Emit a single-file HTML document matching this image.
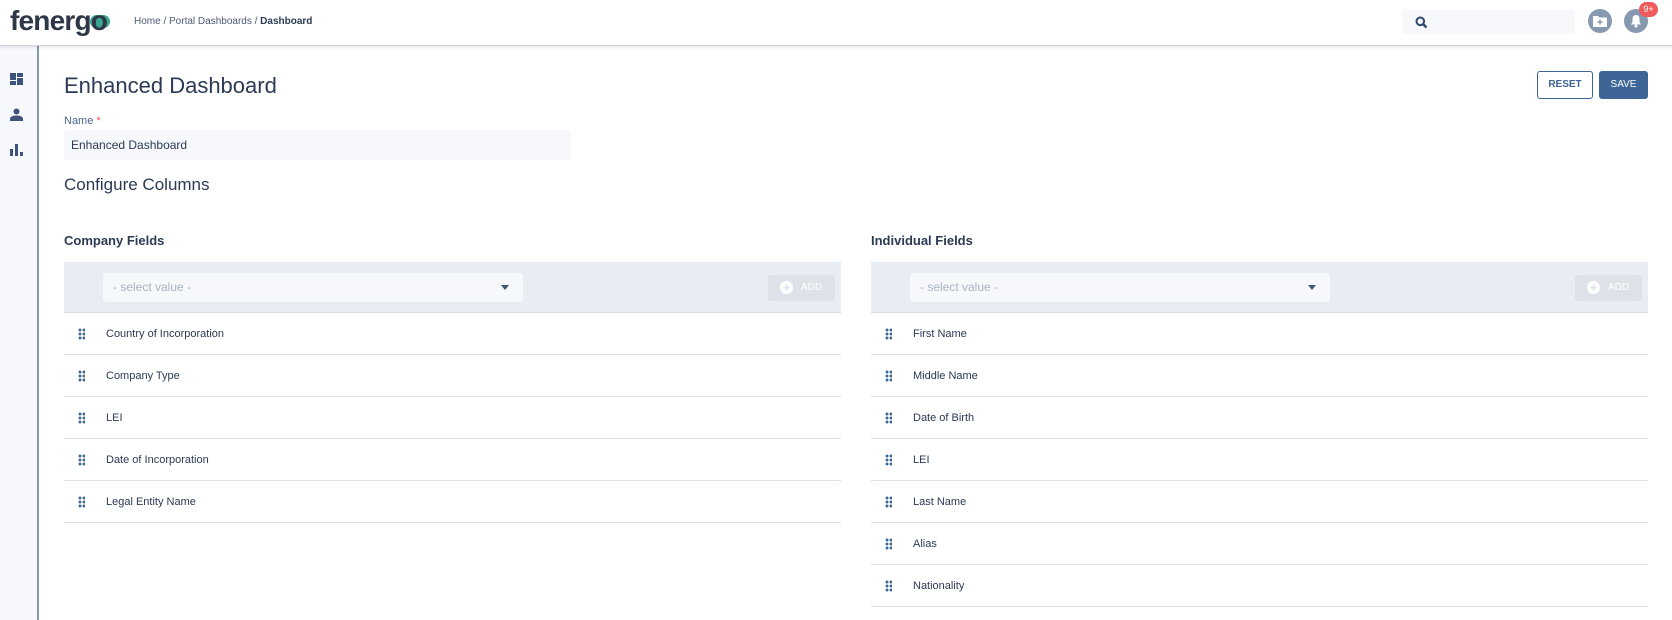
<!DOCTYPE html>
<html><head><meta charset="utf-8"><style>
*{box-sizing:border-box;margin:0;padding:0}
body{width:1672px;height:620px;overflow:hidden;background:#fff;font-family:"Liberation Sans",sans-serif;color:#2b3a55;position:relative}
.hdr{position:absolute;left:0;top:0;width:1672px;height:46px;background:#fff;border-bottom:1px solid #cfd6df;box-shadow:0 1px 3px rgba(0,0,0,.12);z-index:2}
.logo{position:absolute;left:10px;top:5px;font-size:28px;font-weight:bold;color:#2d3748;letter-spacing:-.8px;z-index:1}
.pill{position:absolute;left:90px;top:15px;width:20px;height:13px;border-radius:7px;background:#3aa88e;z-index:0}
.crumb{position:absolute;left:134px;top:16px;font-size:10px;color:#4a5a75}
.side{position:absolute;left:0;top:46px;width:39px;height:574px;background:#f6f8fb;border-right:2px solid #8898ad}
.ttl{position:absolute;left:64px;top:73px;font-size:22px;color:#2b3a55}
.btn{position:absolute;top:71px;height:28px;border-radius:3px;font-size:10px;line-height:26px;text-align:center;font-weight:bold}
.lbl{position:absolute;left:64px;top:115px;font-size:11px;color:#4a6590}
.inp{position:absolute;left:64px;top:130px;width:507px;height:30px;background:#f6f8fb;border-radius:2px;font-size:12px;line-height:30px;padding-left:7px;color:#2b3a55}
.cc{position:absolute;left:64px;top:175px;font-size:17px;color:#2b3a55}
.panel{position:absolute;top:232px;width:777px}
.ph{font-size:13px;font-weight:bold;height:30px;line-height:18px;color:#2b3a55}
.bar{height:51px;background:#e8edf3;border-bottom:1px solid #d6dce4;position:relative}
.sel{position:absolute;left:39px;top:11px;width:420px;height:29px;background:#f6f8fb;border-radius:3px;font-size:12px;color:#a9b3c1;line-height:29px;padding-left:10px}
.sel:after{content:"";position:absolute;right:14px;top:12px;border:4px solid transparent;border-top:5px solid #3d5478}
.add{position:absolute;right:6px;top:13px;width:67px;height:26px;background:#dde2e8;border-radius:3px;color:#fff;font-size:10px;line-height:26px;padding-left:33px}
.add:before{content:"+";position:absolute;left:12px;top:6px;width:13px;height:13px;border-radius:50%;background:#fff;color:#dde2e8;font-size:13px;line-height:13px;text-align:center;font-weight:bold}
.row{height:42px;border-bottom:1px solid #dfe3e8;position:relative;font-size:11px;line-height:42px;padding-left:42px;color:#2b3a55}
.dots{position:absolute;left:14px;top:15px;width:7px;height:12px;background:radial-gradient(circle,#3d6596 1.3px,transparent 1.6px) 0 0/4px 4px}
</style></head><body>
<div class="hdr">
<div class="pill"></div><div class="logo">fenergo</div>
<div class="crumb">Home / Portal Dashboards / <b style="color:#2b3a55">Dashboard</b></div>
<div style="position:absolute;left:1402px;top:10px;width:173px;height:24px;background:#f6f8fb;border-radius:3px"><svg style="position:absolute;left:13px;top:6px" width="13" height="13" viewBox="0 0 13 13"><circle cx="5.3" cy="5.3" r="3.8" fill="none" stroke="#2f4a73" stroke-width="2"/><path d="M8 8l3.5 3.5" stroke="#2f4a73" stroke-width="2.4"/></svg></div>
<div style="position:absolute;left:1588px;top:9px;width:24px;height:24px;border-radius:50%;background:#8799b0"><svg style="position:absolute;left:5px;top:6px" width="14" height="12" viewBox="0 0 14 12"><path d="M0 1h5l1.5 1.5H14V12H0z" fill="#fff"/><path d="M7 4.5v5M4.5 7h5" stroke="#8799b0" stroke-width="1.5"/></svg></div>
<div style="position:absolute;left:1624px;top:9px;width:24px;height:24px;border-radius:50%;background:#8799b0"><svg style="position:absolute;left:6px;top:5px" width="12" height="14" viewBox="0 0 12 14"><path d="M6 1C3.5 1 2.5 3 2.5 5v3L1 10.5h10L9.5 8V5C9.5 3 8.5 1 6 1z" fill="#fff"/><circle cx="6" cy="12" r="1.5" fill="#fff"/></svg></div>
<div style="position:absolute;left:1639px;top:2px;width:19px;height:15px;border-radius:8px;background:#ef5b5b;color:#fff;font-size:9px;line-height:15px;text-align:center">9+</div>
</div>
<div class="side">
<svg style="position:absolute;left:10px;top:27px" width="13" height="12" viewBox="0 0 13 12"><path d="M0 0h6v7H0zM7 0h6v4H7zM0 8h6v4H0zM7 5h6v7H7z" fill="#3d5478"/></svg>
<svg style="position:absolute;left:10px;top:62px" width="13" height="13" viewBox="0 0 13 13"><circle cx="6.5" cy="3.5" r="3" fill="#3d5478"/><path d="M0 13v-2c0-2 2-3.5 6.5-3.5S13 9 13 11v2z" fill="#3d5478"/></svg>
<svg style="position:absolute;left:10px;top:97px" width="13" height="13" viewBox="0 0 13 13"><path d="M0 6h3v7H0zM5 1h3v12H5zM10 9h3v4h-3z" fill="#3d5478"/></svg>
</div>
<div class="ttl">Enhanced Dashboard</div>
<div class="btn" style="left:1537px;width:56px;border:1px solid #3d6596;color:#3d6596">RESET</div>
<div class="btn" style="left:1599px;width:49px;background:#3d6596;color:#fff;line-height:28px;font-weight:normal">SAVE</div>
<div class="lbl">Name <span style="color:#e55">*</span></div>
<div class="inp">Enhanced Dashboard</div>
<div class="cc">Configure Columns</div>
<div class="panel" style="left:64px">
<div class="ph">Company Fields</div>
<div class="bar"><div class="sel">- select value -</div><div class="add">ADD</div></div>
<div class="row"><i class="dots"></i>Country of Incorporation</div>
<div class="row"><i class="dots"></i>Company Type</div>
<div class="row"><i class="dots"></i>LEI</div>
<div class="row"><i class="dots"></i>Date of Incorporation</div>
<div class="row"><i class="dots"></i>Legal Entity Name</div>
</div>
<div class="panel" style="left:871px">
<div class="ph">Individual Fields</div>
<div class="bar"><div class="sel">- select value -</div><div class="add">ADD</div></div>
<div class="row"><i class="dots"></i>First Name</div>
<div class="row"><i class="dots"></i>Middle Name</div>
<div class="row"><i class="dots"></i>Date of Birth</div>
<div class="row"><i class="dots"></i>LEI</div>
<div class="row"><i class="dots"></i>Last Name</div>
<div class="row"><i class="dots"></i>Alias</div>
<div class="row"><i class="dots"></i>Nationality</div>
</div>
</body></html>
